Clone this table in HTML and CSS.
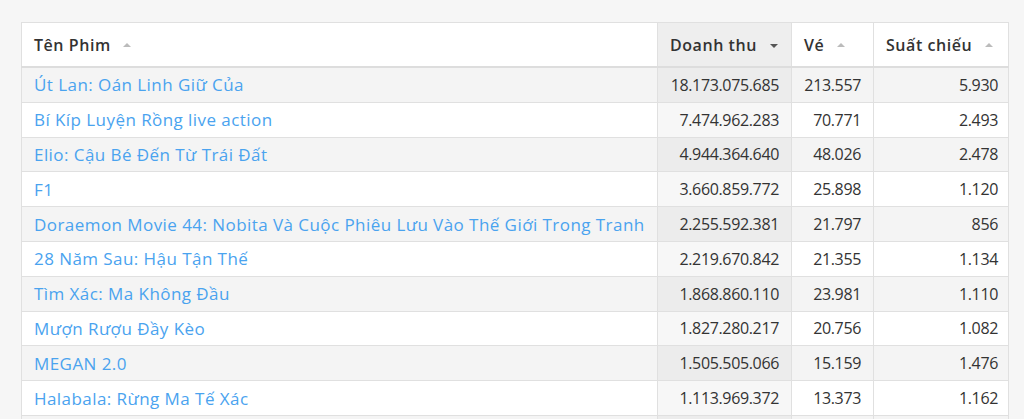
FILE: index.html
```html
<!DOCTYPE html>
<html lang="vi">
<head>
<meta charset="utf-8">
<title>Doanh thu phim</title>
<link rel="stylesheet" href="styles.css">
</head>
<body>
<div class="page">
  <table class="films">
    <thead>
      <tr>
        <th class="col-name">Tên Phim <span class="sort up"></span></th>
        <th class="col-rev sorted">Doanh thu <span class="sort down"></span></th>
        <th class="col-tix">Vé <span class="sort up"></span></th>
        <th class="col-shows">Suất chiếu <span class="sort up"></span></th>
      </tr>
    </thead>
    <tbody>
      <tr><td><a href="#">Út Lan: Oán Linh Giữ Của</a></td><td class="num sorted">18.173.075.685</td><td class="num">213.557</td><td class="num">5.930</td></tr>
      <tr><td><a href="#">Bí Kíp Luyện Rồng live action</a></td><td class="num sorted">7.474.962.283</td><td class="num">70.771</td><td class="num">2.493</td></tr>
      <tr><td><a href="#">Elio: Cậu Bé Đến Từ Trái Đất</a></td><td class="num sorted">4.944.364.640</td><td class="num">48.026</td><td class="num">2.478</td></tr>
      <tr><td><a href="#">F1</a></td><td class="num sorted">3.660.859.772</td><td class="num">25.898</td><td class="num">1.120</td></tr>
      <tr><td><a href="#">Doraemon Movie 44: Nobita Và Cuộc Phiêu Lưu Vào Thế Giới Trong Tranh</a></td><td class="num sorted">2.255.592.381</td><td class="num">21.797</td><td class="num">856</td></tr>
      <tr><td><a href="#">28 Năm Sau: Hậu Tận Thế</a></td><td class="num sorted">2.219.670.842</td><td class="num">21.355</td><td class="num">1.134</td></tr>
      <tr><td><a href="#">Tìm Xác: Ma Không Đầu</a></td><td class="num sorted">1.868.860.110</td><td class="num">23.981</td><td class="num">1.110</td></tr>
      <tr><td><a href="#">Mượn Rượu Đầy Kèo</a></td><td class="num sorted">1.827.280.217</td><td class="num">20.756</td><td class="num">1.082</td></tr>
      <tr><td><a href="#">MEGAN 2.0</a></td><td class="num sorted">1.505.505.066</td><td class="num">15.159</td><td class="num">1.476</td></tr>
      <tr><td><a href="#">Halabala: Rừng Ma Tế Xác</a></td><td class="num sorted">1.113.969.372</td><td class="num">13.373</td><td class="num">1.162</td></tr>
      <tr class="more"><td></td><td class="num sorted"></td><td class="num"></td><td class="num"></td></tr>
    </tbody>
  </table>
</div>
</body>
</html>
```
FILE: styles.css
```css
html, body {
  margin: 0;
  padding: 0;
  background: #f6f6f6;
}
body {
  font-family: "Open Sans", "Noto Sans", sans-serif;
  color: #333;
  font-size: 16px;
}
.page {
  padding: 22px 0 0 21px;
}
.films {
  width: 987px;
  border-collapse: collapse;
  border: 1px solid #ddd;
  table-layout: fixed;
}
.films th, .films td {
  border: 1px solid #e0e0e0;
  padding: 0 12px;
  white-space: nowrap;
}
.films th {
  height: 43px;
  background: #fff;
  text-align: left;
  font-weight: 600;
  font-size: 16px;
  letter-spacing: 0.55px;
  color: #333;
  border-bottom: 2px solid #ddd;
}
.films th.sorted {
  background: #eeeeee;
}
.col-name { width: 611px; }
.col-rev { width: 109px; }
.col-tix { width: 57px; }
.col-shows { width: 110px; }
.films td {
  height: 33.8px;
  background: #fff;
}
.films tbody tr:nth-child(odd) td {
  background: #f4f4f4;
}
.films tbody tr:nth-child(even) td.sorted {
  background: #f7f7f7;
}
.films tbody tr:nth-child(odd) td.sorted {
  background: #ececec;
}
.films td.num {
  text-align: right;
  letter-spacing: -0.35px;
}
.films td.num:last-child {
  padding-right: 10px;
}
.films a {
  font-size: 17px;
  letter-spacing: 0.44px;
  color: #4aa3ef;
  text-decoration: none;
}
.sort {
  display: inline-block;
  width: 0;
  height: 0;
  margin-left: 8px;
  vertical-align: middle;
  border-left: 4px solid transparent;
  border-right: 4px solid transparent;
}
.sort.up {
  border-bottom: 4px solid #bbb;
  margin-top: -3px;
}
.sort.down {
  border-top: 4px solid #555;
}
```
